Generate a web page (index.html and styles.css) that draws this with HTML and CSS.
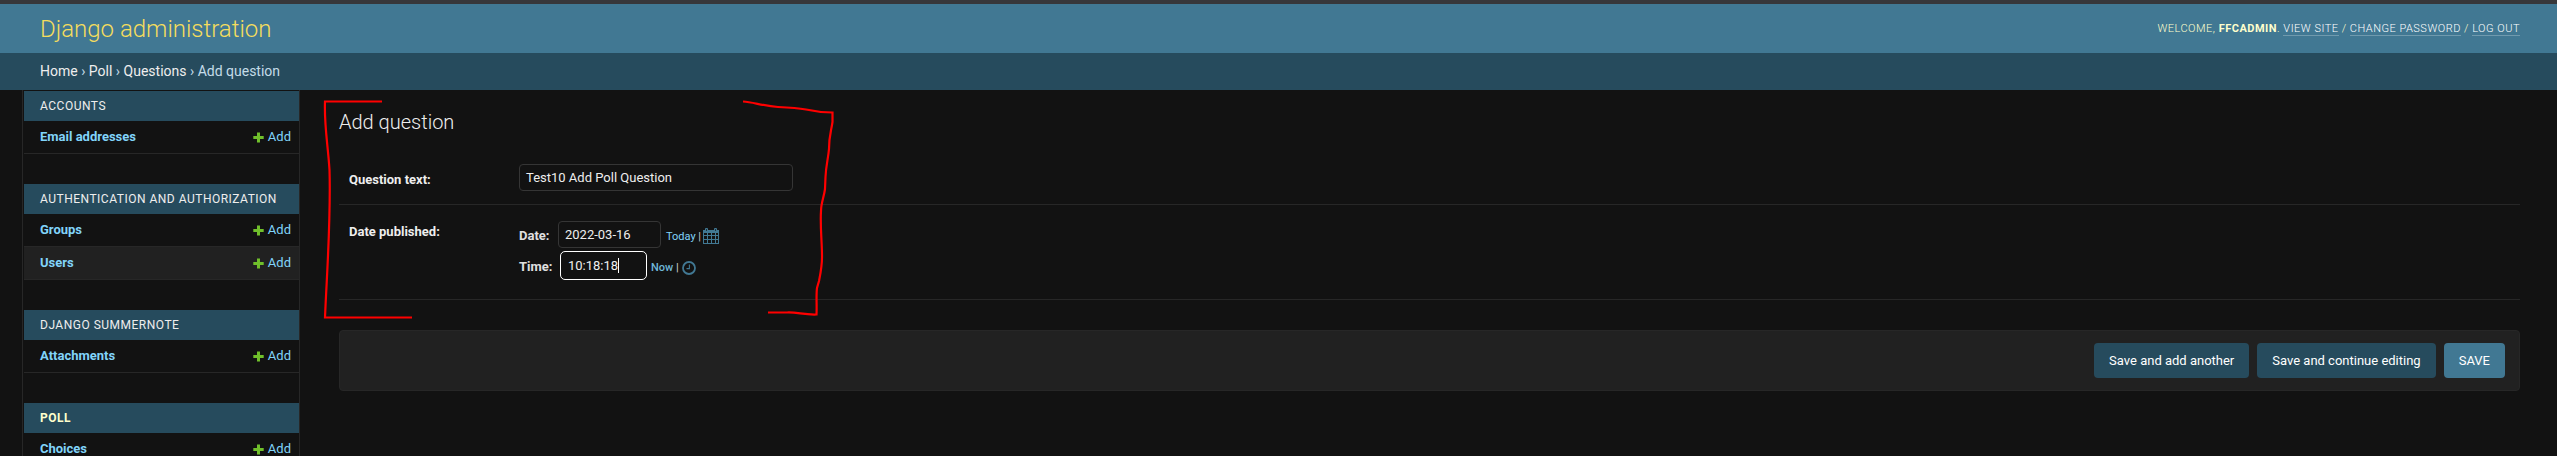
FILE: index.html
```html
<!DOCTYPE html>
<html lang="en">
<head>
<meta charset="utf-8">
<title>Add question | Django administration</title>
<link rel="stylesheet" href="styles.css">
</head>
<body>
<svg class="symbols" width="0" height="0">
  <symbol id="plus" viewBox="0 0 11 11"><path fill="#70bf2b" d="M4 .6h3V4h3.7v3H7v3.6H4V7H.3V4H4z"/></symbol>
</svg>
<header class="header">
  <h1 class="site-name">Django administration</h1>
  <div class="user-tools">Welcome, <strong>ffcadmin</strong>. <a>View site</a> / <a>Change password</a> / <a>Log out</a></div>
</header>
<nav class="breadcrumbs"><a>Home</a> › <a>Poll</a> › <a>Questions</a> › Add question</nav>
<div class="main">
  <aside class="sidebar">
    <section class="module">
      <h2 class="caption">Accounts</h2>
      <div class="row"><b>Email addresses</b><a class="add"><svg><use href="#plus"/></svg>Add</a></div>
    </section>
    <section class="module">
      <h2 class="caption">Authentication and Authorization</h2>
      <div class="row"><b>Groups</b><a class="add"><svg><use href="#plus"/></svg>Add</a></div>
      <div class="row alt"><b>Users</b><a class="add"><svg><use href="#plus"/></svg>Add</a></div>
    </section>
    <section class="module">
      <h2 class="caption">Django Summernote</h2>
      <div class="row"><b>Attachments</b><a class="add"><svg><use href="#plus"/></svg>Add</a></div>
    </section>
    <section class="module">
      <h2 class="caption current">Poll</h2>
      <div class="row"><b>Choices</b><a class="add"><svg><use href="#plus"/></svg>Add</a></div>
    </section>
  </aside>
  <main class="content">
    <h2 class="title">Add question</h2>
    <div class="form-row question">
      <label class="label">Question text:</label>
      <div class="field wide">Test10 Add Poll Question</div>
    </div>
    <div class="form-row published">
      <label class="label">Date published:</label>
      <div class="datetime">
        <div class="line"><span class="sub">Date:</span><div class="field date">2022-03-16</div>
          <span class="shortcut">Today <i>|</i></span>
          <svg class="calendar" viewBox="0 0 16 16"><path fill="#417893" fill-rule="evenodd" d="M0 2h2V1q0-1 1-1h1q1 0 1 1v1h6V1q0-1 1-1h1q1 0 1 1v1h2v14H0zM1 5v2h3V5zm4 0v2h3V5zm4 0v2h3V5zm4 0v2h2V5zM1 8v3h3V8zm4 0v3h3V8zm4 0v3h3V8zm4 0v3h2V8zM1 12v3h3v-3zm4 0v3h3v-3zm4 0v3h3v-3zm4 0v3h2v-3z"/><path stroke="#121212" stroke-width=".7" d="M3.5 1v2M12.5 1v2"/></svg>
        </div>
        <div class="line time-line"><span class="sub">Time:</span><div class="field time">10:18:18<span class="caret"></span></div>
          <span class="shortcut now">Now <i>|</i></span>
          <svg class="clock" viewBox="0 0 14 14"><circle cx="7" cy="7" r="6" fill="none" stroke="#417893" stroke-width="1.8"/><path d="M7.4 3.5v4.1H4.5" fill="none" stroke="#417893" stroke-width="1.1"/></svg>
        </div>
      </div>
    </div>
    <div class="submit-row">
      <button class="button">Save and add another</button>
      <button class="button">Save and continue editing</button>
      <button class="button primary">SAVE</button>
    </div>
  </main>
</div>
<svg class="marks" viewBox="0 0 2557 456">
  <path d="M382 101.500H325C324 125 328 145 329.500 170C331 220 327 270 325 317.500H412"/>
  <path d="M743 101.500C753 102 763 106 778 107C788 107.500 797 108 806 109.500C815 111.500 824 112.500 832.500 112.500V122C831 132 829 136 829 149C828 160 826 165 825.500 177L825 189C824 197 821 203 821 211C820 226 822 241 822 257C822 267 820 276 819 281L817 288C816 295 817 306 816.500 314.500C804 315 797 312 787 312.500H768"/>
</svg>
</body>
</html>
```
FILE: styles.css
```css
* { box-sizing: border-box; }
body {
  margin: 0;
  height: 456px;
  overflow: hidden;
  background: #121212;
  color: #eee;
  font-family: Roboto, "Liberation Sans", sans-serif;
  font-size: 13px;
}
.symbols { position: absolute; }
.header {
  height: 53px;
  padding: 0 37px 0 40px;
  border-top: 4px solid #37373a;
  background: #417893;
  display: flex;
  justify-content: space-between;
  align-items: center;
}
.site-name { margin: 0; color: #f5dd5d; font-size: 24px; font-weight: 300; line-height: 28px; }
.user-tools { font-size: 11px; letter-spacing: .5px; text-transform: uppercase; color: #ffc; font-weight: 300; line-height: 14px; }
.user-tools strong { font-weight: 700; }
.user-tools a { color: #fff; border-bottom: 1px solid rgba(255,255,255,.25); }
.breadcrumbs { height: 37px; padding-left: 40px; background: #264b5d; color: #c4dce8; font-size: 14px; line-height: 37px; }
.breadcrumbs a { color: #eee; }
.main { display: flex; height: 366px; }
.sidebar {
  width: 278px;
  margin-left: 22px;
  padding: 1px 0 0 1px;
  border: solid #272727;
  border-width: 0 1px;
  flex: none;
  overflow: hidden;
}
.module { margin-bottom: 30px; }
.caption { margin: 0; height: 30px; padding-left: 16px; background: #264b5d; color: #eee; font-size: 12px; font-weight: 400; letter-spacing: .5px; line-height: 30px; text-transform: uppercase; }
.caption.current { color: #ffc; font-weight: 700; }
.row { height: 33px; padding: 0 8px 0 16px; border-bottom: 1px solid #272727; display: flex; justify-content: space-between; align-items: center; color: #81d4fa; line-height: 16px; }
.row.alt { background: #212121; }
.row b { font-weight: 700; }
.add { display: flex; align-items: center; gap: 4px; }
.add svg { width: 11px; height: 11px; }
.content { flex: 1; padding: 20px 37px 0 39px; }
.title { margin: 0; height: 24px; font-size: 20px; font-weight: 300; line-height: 24px; }
.form-row { display: flex; border-bottom: 1px solid #272727; padding-left: 10px; }
.question { height: 71px; padding-top: 30px; }
.published { height: 95px; padding-top: 16px; }
.label { width: 170px; padding-top: 7px; font-weight: 700; line-height: 17px; }
.published .label { padding-top: 2px; }
.field { height: 27px; border: 1px solid #353535; border-radius: 4px; padding-left: 6px; line-height: 25px; }
.wide { width: 274px; }
.line { display: flex; align-items: flex-start; height: 30px; }
.sub { width: 39px; padding-top: 6px; color: #e0e0e0; font-weight: 700; line-height: 17px; }
.date { width: 103px; }
.time { width: 87px; height: 29px; border-color: #fff; border-radius: 5px; padding-left: 7px; line-height: 27px; display: flex; align-items: center; }
.time-line .sub { width: 41px; padding-top: 7px; }
.caret { width: 1px; height: 15px; background: #fff; }
.shortcut { margin-left: 5px; padding-top: 7px; font-size: 11px; line-height: 17px; color: #81d4fa; white-space: nowrap; }
.shortcut i { font-style: normal; color: #ccc; }
.now { margin-left: 4px; padding-top: 8px; color: #6fb6d8; font-weight: 500; }
.calendar { width: 16px; height: 16px; margin: 7px 0 0 2px; }
.clock { width: 14px; height: 14px; margin: 10px 0 0 3px; }
.submit-row { height: 61px; margin-top: 30px; padding: 12px 14px; border: 1px solid #272727; border-radius: 4px; background: #212121; display: flex; justify-content: flex-end; gap: 8px; }
.button { height: 35px; padding: 0 15px; border: 0; border-radius: 4px; background: #264b5d; color: #fff; font: 400 13px/35px Roboto, sans-serif; }
.button.primary { background: #417893; }
.marks { position: absolute; left: 0; top: 0; width: 2557px; height: 456px; pointer-events: none; }
.marks path { fill: none; stroke: #ff0000; stroke-width: 2.2; }
```
